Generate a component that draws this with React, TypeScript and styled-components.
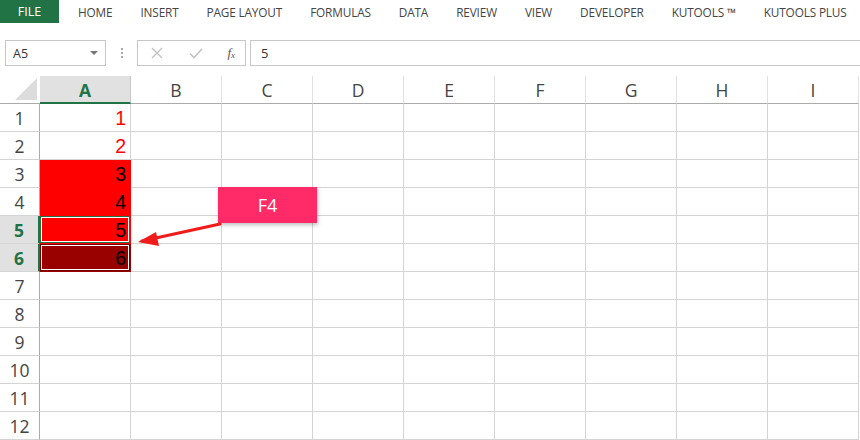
import React from "react";
import styled, { createGlobalStyle } from "styled-components";

const GlobalStyle = createGlobalStyle`
  html, body {
    margin: 0;
    padding: 0;
    background: #ffffff;
    overflow: hidden;
  }
  body {
    font-family: "Open Sans", "Noto Sans", sans-serif;
  }
`;

const TABS = [
  "HOME",
  "INSERT",
  "PAGE LAYOUT",
  "FORMULAS",
  "DATA",
  "REVIEW",
  "VIEW",
  "DEVELOPER",
  "KUTOOLS ™",
  "KUTOOLS PLUS",
];

const COLUMNS = ["A", "B", "C", "D", "E", "F", "G", "H", "I"];

type CellKind = "plain" | "redText" | "redFill" | "active" | "selected";

const CELLS_A: Record<number, { value: string; kind: CellKind }> = {
  1: { value: "1", kind: "redText" },
  2: { value: "2", kind: "redText" },
  3: { value: "3", kind: "redFill" },
  4: { value: "4", kind: "redFill" },
  5: { value: "5", kind: "active" },
  6: { value: "6", kind: "selected" },
};

export default function App() {
  const rows = Array.from({ length: 12 }, (_, i) => i + 1);

  return (
    <Page>
      <GlobalStyle />
      <Ribbon>
        <FileTab>FILE</FileTab>
        <TabList>
          {TABS.map((t) => (
            <Tab key={t}>{t}</Tab>
          ))}
        </TabList>
      </Ribbon>

      <FormulaBar>
        <NameBox>
          <span>A5</span>
          <DropArrow />
        </NameBox>
        <Grip>
          <i />
          <i />
          <i />
        </Grip>
        <ActionBox>
          <svg width="14" height="14" viewBox="0 0 14 14">
            <path d="M2 2 L12 12 M12 2 L2 12" stroke="#c3c3c3" strokeWidth="1.4" />
          </svg>
          <svg width="16" height="14" viewBox="0 0 16 14">
            <path d="M2 7.5 L6 11.5 L14 3" stroke="#c3c3c3" strokeWidth="1.6" fill="none" />
          </svg>
          <FxLabel>
            f<sub>x</sub>
          </FxLabel>
        </ActionBox>
        <FormulaInput>5</FormulaInput>
      </FormulaBar>

      <SheetWrap>
        <Sheet>
          <Corner>
            <svg width="22" height="22" viewBox="0 0 22 22">
              <path d="M22 0 L22 22 L0 22 Z" fill="#dcdcdc" />
            </svg>
          </Corner>
          {COLUMNS.map((c) => (
            <ColHeader key={c} $active={c === "A"}>
              {c}
            </ColHeader>
          ))}
          {rows.map((r) => (
            <React.Fragment key={r}>
              <RowHeader $active={r === 5 || r === 6}>{r}</RowHeader>
              {COLUMNS.map((c) => {
                const data = c === "A" ? CELLS_A[r] : undefined;
                return (
                  <Cell key={c} $kind={data ? data.kind : "plain"}>
                    {data ? data.value : ""}
                  </Cell>
                );
              })}
            </React.Fragment>
          ))}
        </Sheet>

        <Callout>F4</Callout>
        <ArrowSvg width="100" height="40" viewBox="0 0 100 40">
          <path d="M98 3 L20 20" stroke="#f01c1c" strokeWidth="3" strokeLinecap="round" />
          <path d="M16 21 L34 11 L37 25 Z" fill="#f01c1c" />
        </ArrowSvg>
      </SheetWrap>
    </Page>
  );
}

const Page = styled.div`
  width: 860px;
  height: 440px;
  overflow: hidden;
  background: #fff;
  color: #444;
`;

const Ribbon = styled.div`
  display: flex;
  align-items: stretch;
  height: 23px;
`;

const FileTab = styled.div`
  width: 59px;
  background: #217346;
  color: #fff;
  font-size: 12.5px;
  display: flex;
  align-items: center;
  justify-content: center;
`;

const TabList = styled.div`
  display: flex;
  align-items: center;
  gap: 28px;
  padding-left: 19px;
`;

const Tab = styled.div`
  font-size: 11.8px;
  color: #444;
  white-space: nowrap;
  letter-spacing: -0.15px;
`;

const FormulaBar = styled.div`
  display: flex;
  align-items: stretch;
  height: 26px;
  margin-top: 17px;
  padding-left: 5px;
`;

const NameBox = styled.div`
  width: 101px;
  border: 1px solid #c6c6c6;
  box-sizing: border-box;
  display: flex;
  align-items: center;
  justify-content: space-between;
  padding: 0 7px 0 7px;
  font-size: 12.5px;
  color: #333;
`;

const DropArrow = styled.span`
  width: 0;
  height: 0;
  border-left: 4px solid transparent;
  border-right: 4px solid transparent;
  border-top: 4px solid #777;
`;

const Grip = styled.div`
  width: 31px;
  display: flex;
  flex-direction: column;
  align-items: center;
  justify-content: center;
  gap: 2px;

  i {
    width: 2px;
    height: 2px;
    background: #a8a8a8;
  }
`;

const ActionBox = styled.div`
  width: 109px;
  border: 1px solid #c6c6c6;
  box-sizing: border-box;
  display: flex;
  align-items: center;
  justify-content: space-between;
  padding: 0 10px 0 12px;
`;

const FxLabel = styled.span`
  font-family: "Liberation Serif", "DejaVu Serif", serif;
  font-style: italic;
  font-size: 13px;
  color: #555;

  sub {
    font-size: 9px;
    vertical-align: -1px;
  }
`;

const FormulaInput = styled.div`
  flex: 1;
  margin-left: 4px;
  border-top: 1px solid #c6c6c6;
  border-bottom: 1px solid #c6c6c6;
  border-left: 1px solid #c6c6c6;
  display: flex;
  align-items: center;
  padding-left: 10px;
  font-size: 13px;
  color: #333;
`;

const SheetWrap = styled.div`
  position: relative;
  margin-top: 10px;
`;

const Sheet = styled.div`
  display: grid;
  grid-template-columns: 40px repeat(9, 91px);
  grid-template-rows: 28px;
  grid-auto-rows: 28px;
`;

const Corner = styled.div`
  display: flex;
  align-items: flex-end;
  justify-content: flex-end;
  padding: 0 3px 3px 0;
  border-bottom: 1px solid #ababab;
`;

const ColHeader = styled.div<{ $active?: boolean }>`
  box-sizing: border-box;
  display: flex;
  align-items: center;
  justify-content: center;
  font-family: "Open Sans", "Noto Sans", sans-serif;
  font-size: 17.5px;
  background: ${(p) => (p.$active ? "#e1e1e1" : "#fff")};
  color: ${(p) => (p.$active ? "#217346" : "#444")};
  font-weight: ${(p) => (p.$active ? 700 : 400)};
  border-right: 1px solid ${(p) => (p.$active ? "#c6c6c6" : "#e1e1e1")};
  border-bottom: ${(p) => (p.$active ? "2px solid #217346" : "1px solid #ababab")};
  padding-top: ${(p) => (p.$active ? "1px" : "0")};
`;

const RowHeader = styled.div<{ $active?: boolean }>`
  box-sizing: border-box;
  display: flex;
  align-items: center;
  justify-content: center;
  font-family: "Open Sans", "Noto Sans", sans-serif;
  font-size: 17.5px;
  background: ${(p) => (p.$active ? "#e1e1e1" : "#fff")};
  color: ${(p) => (p.$active ? "#217346" : "#444")};
  font-weight: ${(p) => (p.$active ? 700 : 400)};
  border-bottom: 1px solid #d4d4d4;
  border-right: ${(p) => (p.$active ? "2px solid #217346" : "1px solid #ababab")};
`;

const kindBg: Record<CellKind, string> = {
  plain: "#fff",
  redText: "#fff",
  redFill: "#ff0000",
  active: "#ff0000",
  selected: "#990000",
};

const kindShadow: Record<CellKind, string> = {
  plain: "none",
  redText: "none",
  redFill: "none",
  active: "inset 0 0 0 1px #217346, inset 0 0 0 2px #fff",
  selected: "inset 0 0 0 1px #7a0000, inset 0 0 0 2px #fff",
};

const Cell = styled.div<{ $kind: CellKind }>`
  box-sizing: border-box;
  display: flex;
  align-items: flex-end;
  justify-content: flex-end;
  padding: 0 4px 1px 0;
  font-family: "Liberation Sans", "Arial", sans-serif;
  font-size: 19.5px;
  line-height: 24px;
  color: ${(p) => (p.$kind === "redText" ? "#ff0000" : "#000")};
  background: ${(p) => kindBg[p.$kind]};
  box-shadow: ${(p) => kindShadow[p.$kind]};
  border-right: 1px solid ${(p) =>
    p.$kind === "redFill" ? "#ff0000" : p.$kind === "plain" || p.$kind === "redText" ? "#d4d4d4" : "transparent"};
  border-bottom: 1px solid ${(p) =>
    p.$kind === "redFill" ? "#ff0000" : p.$kind === "plain" || p.$kind === "redText" ? "#d4d4d4" : "transparent"};
`;

const Callout = styled.div`
  position: absolute;
  left: 218px;
  top: 111px;
  width: 99px;
  height: 36px;
  background: #ff2a68;
  color: #fff;
  font-family: "Open Sans", "Noto Sans", sans-serif;
  font-size: 18px;
  display: flex;
  align-items: center;
  justify-content: center;
  box-shadow: 1px 2px 4px rgba(0, 0, 0, 0.25);
`;

const ArrowSvg = styled.svg`
  position: absolute;
  left: 122px;
  top: 145px;
  overflow: visible;
`;
